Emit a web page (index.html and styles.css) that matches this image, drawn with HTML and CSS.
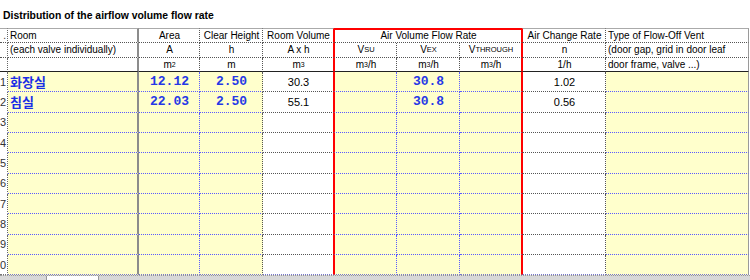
FILE: index.html
```html
<!DOCTYPE html>
<html>
<head>
<meta charset="utf-8">
<link rel="stylesheet" href="styles.css">
</head>
<body>
<div class="title">Distribution of the airflow volume flow rate</div>
<div class="sheet">
  <!-- header row 1 -->
  <div class="c t rn"><span class="dot">.</span></div>
  <div class="c t l room">Room</div>
  <div class="c t">Area</div>
  <div class="c t">Clear Height</div>
  <div class="c t rv">Room Volume</div>
  <div class="c span">Air Volume Flow Rate</div>
  <div class="c t ac">Air Change Rate</div>
  <div class="c t l ty">Type of Flow-Off Vent</div>
  <!-- header row 2 -->
  <div class="c rn"></div>
  <div class="c l room">(each valve individually)</div>
  <div class="c">A</div>
  <div class="c">h</div>
  <div class="c rv">A x h</div>
  <div class="c su">V<sub>SU</sub></div>
  <div class="c">V<sub>EX</sub></div>
  <div class="c th">V<sub>THROUGH</sub></div>
  <div class="c ac">n</div>
  <div class="c l ty">(door gap, grid in door leaf</div>
  <!-- header row 3 -->
  <div class="c b rn"></div>
  <div class="c b l room"></div>
  <div class="c b">m<sup>2</sup></div>
  <div class="c b">m</div>
  <div class="c b rv">m<sup>3</sup></div>
  <div class="c b su">m<sup>3</sup>/h</div>
  <div class="c b">m<sup>3</sup>/h</div>
  <div class="c b th">m<sup>3</sup>/h</div>
  <div class="c b ac">1/h</div>
  <div class="c b l ty">door frame, valve ...)</div>

  <!-- data row 1 -->
  <div class="c d rn"><span>1</span></div>
  <div class="c d y l room"><span class="kr">화장실</span></div>
  <div class="c d y vb"><span class="mono">12.12</span></div>
  <div class="c d y"><span class="mono">2.50</span></div>
  <div class="c d rv">30.3</div>
  <div class="c d y vb su"></div>
  <div class="c d y vb"><span class="mono">30.8</span></div>
  <div class="c d y th"></div>
  <div class="c d ac">1.02</div>
  <div class="c d y ty"></div>
  <!-- data row 2 -->
  <div class="c d rn"><span>2</span></div>
  <div class="c d y l room"><span class="kr">침실</span></div>
  <div class="c d y vb"><span class="mono">22.03</span></div>
  <div class="c d y"><span class="mono">2.50</span></div>
  <div class="c d rv">55.1</div>
  <div class="c d y vb su"></div>
  <div class="c d y vb"><span class="mono">30.8</span></div>
  <div class="c d y th"></div>
  <div class="c d ac">0.56</div>
  <div class="c d y ty"></div>
  <!-- data row 3 -->
  <div class="c d rn"><span>3</span></div>
  <div class="c d y l room"></div>
  <div class="c d y vb"></div>
  <div class="c d y"></div>
  <div class="c d rv"></div>
  <div class="c d y vb su"></div>
  <div class="c d y vb"></div>
  <div class="c d y th"></div>
  <div class="c d ac"></div>
  <div class="c d y ty"></div>
  <!-- data row 4 -->
  <div class="c d rn"><span>4</span></div>
  <div class="c d y l room"></div>
  <div class="c d y vb"></div>
  <div class="c d y"></div>
  <div class="c d rv"></div>
  <div class="c d y vb su"></div>
  <div class="c d y vb"></div>
  <div class="c d y th"></div>
  <div class="c d ac"></div>
  <div class="c d y ty"></div>
  <!-- data row 5 -->
  <div class="c d rn"><span>5</span></div>
  <div class="c d y l room"></div>
  <div class="c d y vb"></div>
  <div class="c d y"></div>
  <div class="c d rv"></div>
  <div class="c d y vb su"></div>
  <div class="c d y vb"></div>
  <div class="c d y th"></div>
  <div class="c d ac"></div>
  <div class="c d y ty"></div>
  <!-- data row 6 -->
  <div class="c d rn"><span>6</span></div>
  <div class="c d y l room"></div>
  <div class="c d y vb"></div>
  <div class="c d y"></div>
  <div class="c d rv"></div>
  <div class="c d y vb su"></div>
  <div class="c d y vb"></div>
  <div class="c d y th"></div>
  <div class="c d ac"></div>
  <div class="c d y ty"></div>
  <!-- data row 7 -->
  <div class="c d rn"><span>7</span></div>
  <div class="c d y l room"></div>
  <div class="c d y vb"></div>
  <div class="c d y"></div>
  <div class="c d rv"></div>
  <div class="c d y vb su"></div>
  <div class="c d y vb"></div>
  <div class="c d y th"></div>
  <div class="c d ac"></div>
  <div class="c d y ty"></div>
  <!-- data row 8 -->
  <div class="c d rn"><span>8</span></div>
  <div class="c d y l room"></div>
  <div class="c d y vb"></div>
  <div class="c d y"></div>
  <div class="c d rv"></div>
  <div class="c d y vb su"></div>
  <div class="c d y vb"></div>
  <div class="c d y th"></div>
  <div class="c d ac"></div>
  <div class="c d y ty"></div>
  <!-- data row 9 -->
  <div class="c d rn"><span>9</span></div>
  <div class="c d y l room"></div>
  <div class="c d y vb"></div>
  <div class="c d y"></div>
  <div class="c d rv"></div>
  <div class="c d y vb su"></div>
  <div class="c d y vb"></div>
  <div class="c d y th"></div>
  <div class="c d ac"></div>
  <div class="c d y ty"></div>
  <!-- data row 10 -->
  <div class="c d last rn"><span>0</span></div>
  <div class="c d last y l room"></div>
  <div class="c d last y vb"></div>
  <div class="c d last y"></div>
  <div class="c d last rv"></div>
  <div class="c d last y vb su"></div>
  <div class="c d last y vb"></div>
  <div class="c d last y th"></div>
  <div class="c d last ac"></div>
  <div class="c d last y ty"></div>
</div>
<div class="tabs"><div class="tab"></div></div>
</body>
</html>
```

FILE: styles.css
```css
html, body {
  margin: 0;
  padding: 0;
  background: #ffffff;
  overflow: hidden;
}
body {
  width: 750px;
  height: 280px;
  font-family: "Liberation Sans", Arial, sans-serif;
  color: #000;
}
.title {
  height: 28px;
  box-sizing: border-box;
  padding: 10px 0 0 3px;
  font-size: 10.4px;
  line-height: 12px;
  font-weight: bold;
}
.sheet {
  display: grid;
  grid-template-columns: 8px 131px 61px 63px 71px 63px 63px 62px 84px 143px;
  grid-template-rows: 15px 15px 14px repeat(10, 20.33px);
  width: 749px;
}
.c {
  box-sizing: border-box;
  border-right: 1px dotted #555;
  border-bottom: 1px dotted #555;
  display: flex;
  align-items: center;
  justify-content: center;
  white-space: nowrap;
  overflow: hidden;
  padding: 0 1px 0 2px;
  font-size: 10px;
  line-height: 12px;
  background: #fff;
}
.l { justify-content: flex-start; }
.t { border-top: 1px solid #aaa; }
.b { border-bottom: 1px solid #222; }
.span {
  grid-column: span 3;
  border-top: 2px solid #ff0000;
  border-left: 1px solid #ff0000;
  border-right: 1px solid #ff0000;
}
.rn {
  justify-content: flex-end;
  padding: 0 1px 0 0;
  font-size: 12px;
  color: #333;
  border-right-color: #666;
}
.rn .dot { font-size: 10px; }
.d.rn { border-bottom-color: transparent; }
.d.last.rn { border-bottom-color: #777; }
.room { border-right: 2px solid #8c8c8c; }
.rv { border-right: 1px solid #ff0000; }
.su { border-left: 1px solid #ff0000; }
.th { border-right: 1px solid #ff0000; }
.ac { border-left: 1px solid #ff0000; }
.ty { border-right: 1px solid #9a9a9a; }
.d { font-size: 11px; }
.y {
  background: #ffffcc;
  border-bottom-color: #5a5aff;
}
.vb { border-right-color: #5a5aff; }
.last { border-bottom-color: #7777cc; }
sub {
  font-size: 7.5px;
  vertical-align: -2px;
  line-height: 0;
}
sup {
  font-size: 7px;
  vertical-align: 4px;
  line-height: 0;
}
.kr {
  font-family: "Noto Sans CJK KR", sans-serif;
  font-size: 13px;
  font-weight: bold;
  color: #1a2ee6;
  line-height: 16px;
}
.mono {
  font-family: "Liberation Mono", "Courier New", monospace;
  font-size: 13px;
  font-weight: bold;
  color: #2638e6;
  line-height: 14px;
}
.tabs {
  height: 6px;
  background: #d8d8d8;
  border-top: 1px dotted #999;
  display: flex;
  padding-left: 46px;
}
.tab {
  width: 51px;
  background: #fff;
  border-left: 1px solid #999;
  border-right: 1px solid #999;
}
```
